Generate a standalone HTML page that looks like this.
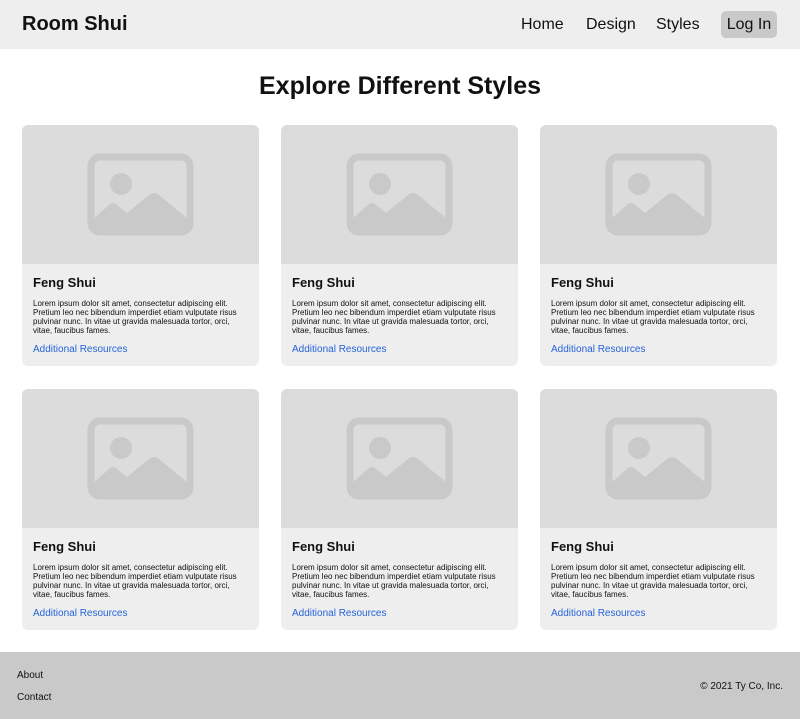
<!DOCTYPE html>
<html><head><style>
*{margin:0;padding:0;box-sizing:border-box}
body{width:800px;height:719px;background:#fff;font-family:"Liberation Sans",sans-serif;position:relative;overflow:hidden}
.hdr{position:absolute;left:0;top:0;width:800px;height:49px;background:#eee}
.logo{position:absolute;left:22px;top:13px;font-size:20px;font-weight:bold;color:#111}
.nav{position:absolute;top:16px;font-size:16px;color:#111}
.login{position:absolute;left:721px;top:11px;width:56px;height:27px;background:#c9c9c9;border-radius:5px;font-size:16px;line-height:27px;text-align:center;color:#111}
h1{position:absolute;left:0;width:800px;top:72px;text-align:center;font-size:25px;font-weight:bold;color:#111}
.card{position:absolute;width:237px;height:241px;background:#eee;border-radius:6px;overflow:hidden}
.img{height:139px;background:#dcdcdc;position:relative}
.img svg{position:absolute;left:65px;top:28px}
.t{position:absolute;left:11px;top:150px;font-size:13px;font-weight:bold;color:#111}
.p{position:absolute;left:11px;top:174px;width:215px;font-size:8px;line-height:9px;color:#111}
.a{position:absolute;left:11px;top:219px;font-size:10px;color:#2563d9}
.ftr{position:absolute;left:0;top:652px;width:800px;height:67px;background:#c9c9c9;font-size:10px;color:#111}
</style></head><body>
<div class="hdr">
<div class="logo">Room Shui</div>
<div class="nav" style="left:521px">Home</div>
<div class="nav" style="left:586px">Design</div>
<div class="nav" style="left:656px">Styles</div>
<div class="login">Log In</div>
</div>
<h1>Explore Different Styles</h1>
<div id="c"></div>
<div class="ftr">
<div style="position:absolute;left:17px;top:18px">About</div>
<div style="position:absolute;left:17px;top:40px">Contact</div>
<div style="position:absolute;right:17px;top:29px">© 2021 Ty Co, Inc.</div>
</div>
<script>
var xs=[22,281,540],ys=[125,389],h='';
ys.forEach(function(y){xs.forEach(function(x){
h+='<div class="card" style="left:'+x+'px;top:'+y+'px"><div class="img"><svg width="108" height="84" viewBox="0 0 108 84"><rect x="4" y="4" width="99" height="75" rx="9" fill="none" stroke="#c9c9c9" stroke-width="7"/><circle cx="34" cy="31" r="11" fill="#c9c9c9"/><path d="M6 66 L22 52 Q26 48 30 52 L40 60 L62 42 Q67 38 72 42 L101 66 L101 78 L6 78 Z" fill="#c9c9c9"/></svg></div><div class="t">Feng Shui</div><div class="p">Lorem ipsum dolor sit amet, consectetur adipiscing elit. Pretium leo nec bibendum imperdiet etiam vulputate risus pulvinar nunc. In vitae ut gravida malesuada tortor, orci, vitae, faucibus fames.</div><div class="a">Additional Resources</div></div>';
});});
document.getElementById('c').innerHTML=h;
</script>
</body></html>
